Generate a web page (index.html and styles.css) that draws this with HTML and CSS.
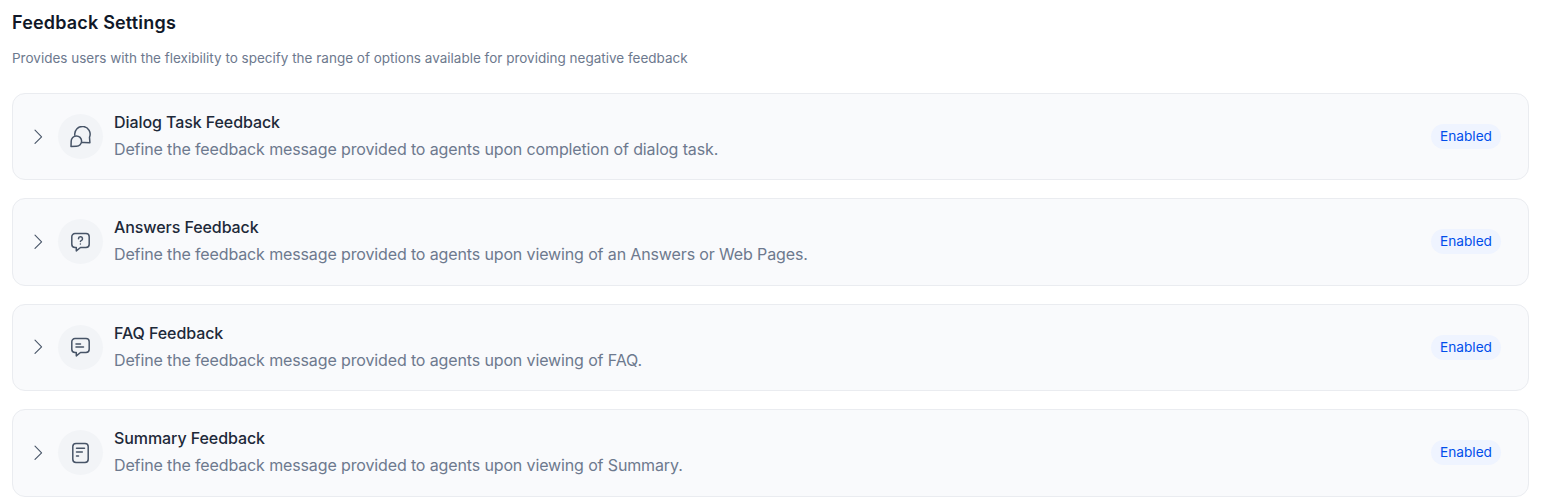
FILE: index.html
```html
<!DOCTYPE html>
<html lang="en">
<head>
<meta charset="utf-8">
<title>Feedback Settings</title>
<link rel="stylesheet" href="styles.css">
</head>
<body>
<main class="page">
  <h1 class="title">Feedback Settings</h1>
  <p class="intro">Provides users with the flexibility to specify the range of options available for providing negative feedback</p>
  <section class="list">
    <article class="card">
      <svg class="chevron" viewBox="0 0 10 16"><path d="M2 1.200 8.600 7.800l-6.600 6.600"/></svg>
      <span class="icon"><svg viewBox="0 0 22 22"><path d="M4.800 9.200A7.700 7.700 0 1 1 19.500 11.200L19.900 16.700L14.200 16.400l-2.400.2"/><path d="M1 20.400 1.200 15.100A5.200 5.200 0 1 1 6.500 20.300Z"/></svg></span>
      <div class="text"><h2 class="name">Dialog Task Feedback</h2><p class="desc">Define the feedback message provided to agents upon completion of dialog task.</p></div>
      <span class="badge">Enabled</span>
    </article>
    <article class="card">
      <svg class="chevron" viewBox="0 0 10 16"><path d="M2 1.200 8.600 7.800l-6.600 6.600"/></svg>
      <span class="icon"><svg viewBox="0 0 22 22"><path d="M5 2.500h11a3.200 3.200 0 0 1 3.200 3.200v7.600a3.200 3.200 0 0 1-3.200 3.200h-5.500L6.300 19.900V16.500H5a3.200 3.200 0 0 1-3.200-3.200V5.700A3.200 3.200 0 0 1 5 2.500Z"/><path d="M8.500 7.700a2 2 0 1 1 2.700 1.900q-.8.300-.8 1M10.400 13v.1"/></svg></span>
      <div class="text"><h2 class="name">Answers Feedback</h2><p class="desc">Define the feedback message provided to agents upon viewing of an Answers or Web Pages.</p></div>
      <span class="badge">Enabled</span>
    </article>
    <article class="card">
      <svg class="chevron" viewBox="0 0 10 16"><path d="M2 1.200 8.600 7.800l-6.600 6.600"/></svg>
      <span class="icon"><svg viewBox="0 0 22 22"><path d="M5 2.500h11a3.200 3.200 0 0 1 3.200 3.200v7.600a3.200 3.200 0 0 1-3.200 3.200h-5.500L6.300 19.900V16.500H5a3.200 3.200 0 0 1-3.200-3.200V5.700A3.200 3.200 0 0 1 5 2.500Z"/><path d="M6 7.900h4.500M6 11.100h7.500"/></svg></span>
      <div class="text"><h2 class="name">FAQ Feedback</h2><p class="desc">Define the feedback message provided to agents upon viewing of FAQ.</p></div>
      <span class="badge">Enabled</span>
    </article>
    <article class="card">
      <svg class="chevron" viewBox="0 0 10 16"><path d="M2 1.200 8.600 7.800l-6.600 6.600"/></svg>
      <span class="icon"><svg viewBox="0 0 22 22"><rect x="2.800" y="1.400" width="15.400" height="19" rx="3.200"/><path d="M6.500 6.300h8M6.500 10h5.800M6.500 13.900h2"/></svg></span>
      <div class="text"><h2 class="name">Summary Feedback</h2><p class="desc">Define the feedback message provided to agents upon viewing of Summary.</p></div>
      <span class="badge">Enabled</span>
    </article>
  </section>
</main>
</body>
</html>
```
FILE: styles.css
```css
* { box-sizing: border-box; }
body { margin: 0; background: #fff; font-family: Inter, sans-serif; overflow: hidden; }
.page { padding: 10px 18px 0 12px; }
.title { margin: 0; font-size: 18px; line-height: 25px; font-weight: 600; letter-spacing: .18px; color: #101828; }
.intro { margin: 13px 0 0; font-size: 13.500px; line-height: 20px; font-weight: 400; color: #6d798e; }
.list { display: flex; flex-direction: column; gap: 18px; padding-top: 25px; }
.card { display: flex; align-items: center; height: 87.400px; padding: 0 27px .200px 20px; background: #f9fafc; border: 1px solid #eaecf0; border-radius: 13px; }
.chevron { width: 10px; height: 16px; }
.chevron, .icon svg { fill: none; stroke: #475467; stroke-width: 1.100; stroke-linecap: round; stroke-linejoin: round; }
.icon { display: grid; place-items: center; width: 45px; height: 45px; margin: 0 11px 0 15px; border-radius: 50%; background: #f2f4f7; }
.icon svg { width: 22px; height: 22px; stroke-width: 1.500; }
.text { flex: 1; padding-bottom: 2.300px; }
.name { margin: 0; font-size: 16px; line-height: 24px; font-weight: 500; letter-spacing: -.08px; color: #1d2939; }
.desc { margin: 3px 0 0; font-size: 16px; line-height: 24px; font-weight: 400; letter-spacing: -.13px; color: #6d798e; }
.badge { padding: 0 9px; font-size: 13.700px; line-height: 25px; font-weight: 400; color: #004eeb; background: #eff4ff; border-radius: 13px; }
```
